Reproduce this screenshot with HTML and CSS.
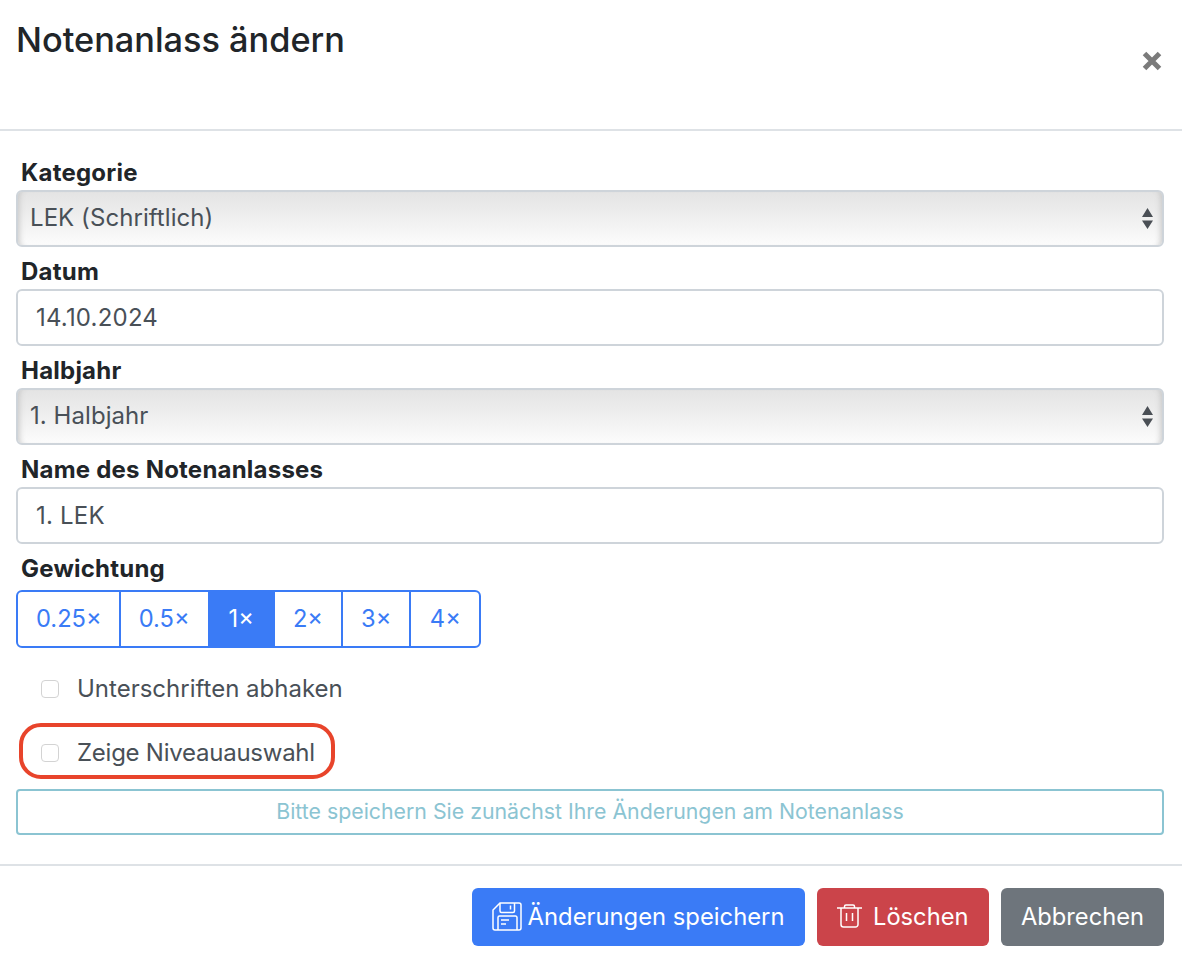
FILE: index.html
```html
<!DOCTYPE html>
<html lang="de">
<head>
<meta charset="UTF-8">
<title>Notenanlass ändern</title>
<link rel="stylesheet" href="styles.css">
</head>
<body>
<div class="modal">
  <header class="modal-header">
    <h1>Notenanlass ändern</h1>
    <button class="close-btn" aria-label="Schliessen">
      <svg width="22" height="22" viewBox="0 0 22 22"><path d="M3.500 3.500 18.500 18.500M18.500 3.500 3.500 18.500" stroke="#7b7b7b" stroke-width="5" fill="none"/></svg>
    </button>
  </header>

  <form class="modal-body">
    <label class="field-label">Kategorie</label>
    <div class="select-box">
      <span>LEK (Schriftlich)</span>
      <svg class="updown" width="11" height="21" viewBox="0 0 11 21"><path d="M5.500 0 11 9H0ZM0 12.500H11L5.500 21Z" fill="#4a4f55"/></svg>
    </div>

    <label class="field-label">Datum</label>
    <div class="text-box">14.10.2024</div>

    <label class="field-label">Halbjahr</label>
    <div class="select-box">
      <span>1. Halbjahr</span>
      <svg class="updown" width="11" height="21" viewBox="0 0 11 21"><path d="M5.500 0 11 9H0ZM0 12.500H11L5.500 21Z" fill="#4a4f55"/></svg>
    </div>

    <label class="field-label">Name des Notenanlasses</label>
    <div class="text-box">1. LEK</div>

    <label class="field-label">Gewichtung</label>
    <div class="btn-group">
      <span class="seg">0.25×</span>
      <span class="seg">0.5×</span>
      <span class="seg active">1×</span>
      <span class="seg">2×</span>
      <span class="seg">3×</span>
      <span class="seg">4×</span>
    </div>

    <div class="check-row first">
      <span class="checkbox"></span>
      <span class="check-text">Unterschriften abhaken</span>
    </div>
    <div class="check-row marked">
      <span class="checkbox"></span>
      <span class="check-text">Zeige Niveauauswahl</span>
    </div>

    <div class="save-note">Bitte speichern Sie zunächst Ihre Änderungen am Notenanlass</div>
  </form>

  <footer class="modal-footer">
    <button class="btn btn-blue">
      <svg width="30" height="29" viewBox="0 0 30 29" fill="none" stroke="#fff" stroke-width="1.500"><path d="M8 1H27a2 2 0 0 1 2 2V26a2 2 0 0 1-2 2H3a2 2 0 0 1-2-2V8Z"/><path d="M8 1V9a1.500 1.500 0 0 0 1.500 1.500H21A1.500 1.500 0 0 0 22.500 9V1"/><path d="M18.500 3.500V7.500"/><path d="M6 28V15.500A1.500 1.500 0 0 1 7.500 14H23.500A1.500 1.500 0 0 1 25 15.500V28"/><path d="M9 18H17M9 22H14"/></svg>
      Änderungen speichern
    </button>
    <button class="btn btn-red">
      <svg width="25" height="24" viewBox="0 0 25 24" fill="none" stroke="#fff" stroke-width="1.500"><path d="M0 4H25"/><path d="M7.500 4V2.500A1.500 1.500 0 0 1 9 1H16a1.500 1.500 0 0 1 1.500 1.500V4"/><path d="M4 4V20.500A2.500 2.500 0 0 0 6.500 23H18.500A2.500 2.500 0 0 0 21 20.500V4"/><path d="M9.500 9V17M15.500 9V17"/></svg>
      Löschen
    </button>
    <button class="btn btn-grey">Abbrechen</button>
  </footer>
</div>
</body>
</html>
```

FILE: styles.css
```css
*{box-sizing:border-box}
html,body{margin:0;padding:0;background:#fff}
body{font-family:Inter,"Liberation Sans",sans-serif;font-size:24px;color:#212529}

.modal{width:1182px;height:962px;display:flex;flex-direction:column}

/* ===== Header ===== */
.modal-header{
  height:131px;padding:17px 18px 0 16px;border-bottom:2px solid #dee2e6;
  display:flex;justify-content:space-between;align-items:flex-start
}
.modal-header h1{margin:0;font-size:34.300px;line-height:46px;font-weight:500}
.close-btn{background:none;border:none;padding:0;margin-top:32px;width:24px;height:24px;display:flex;align-items:center;justify-content:center}

/* ===== Form ===== */
.modal-body{padding:23px 18px 0 16px;display:flex;flex-direction:column;height:735px;border-bottom:2px solid #dee2e6}
.field-label{display:block;padding:1px 0 0 5px;height:36px;line-height:35px;font-weight:700;font-size:24px;letter-spacing:.22px}
.field-label+*{margin-bottom:6px}
.select-box,.text-box{
  height:57px;border:2px solid #ced4da;border-radius:6px;color:#495057;font-size:24px;
  display:flex;align-items:center
}
.text-box{padding-left:18px;background:#fff;letter-spacing:.2px}
.select-box{
  padding:0 9px 0 12px;justify-content:space-between;letter-spacing:.06px;
  background:linear-gradient(180deg,#e4e4e4 0%,#eeeeee 45%,#fcfcfc 100%);
  box-shadow:inset 7px 0 6px -6px #c4c4c4,inset -7px 0 6px -6px #c4c4c4
}
.select-box span{margin-bottom:2px}

.field-label+.btn-group{margin:4px 0 0}
.btn-group{display:flex;width:max-content;height:58px;border:2px solid #3a7bf6;border-radius:6px;overflow:hidden}
.seg{
  display:flex;align-items:center;justify-content:center;padding:0 18px 2px;
  color:#3a7bf6;font-size:23.700px;border-left:2px solid #3a7bf6
}
.seg:first-child{border-left:none;padding:0 17px 2px 18px}
.seg:last-child{padding:0 18.500px 2px}
.seg.active{background:#3a7bf6;color:#fff;padding:0 19px 2px}

.check-row{
  display:flex;align-items:center;height:56px;width:316px;margin-left:3px;padding-left:22px;
  color:#495057;font-size:24px;gap:18px;white-space:nowrap
}
.check-row.first{margin-top:13px;margin-bottom:6px}
.check-row.marked{border:4px solid #e8442b;border-radius:22px;padding:4px 0 0 18px;margin-bottom:10px;letter-spacing:-.25px}
.check-text{margin-bottom:2px}
.checkbox{width:18px;height:18px;border:1px solid #d3d3d3;border-radius:4px;background:#fff;flex:none}

.save-note{
  height:46px;border:2px solid #8bc4d2;border-radius:4px;color:#8bc4d2;font-size:21.300px;padding-bottom:2px;
  display:flex;align-items:center;justify-content:center
}

/* ===== Footer ===== */
.modal-footer{display:flex;justify-content:flex-end;gap:12px;padding:22px 18px 0 0}
.btn{
  height:58px;border:none;border-radius:6px;color:#fff;font:400 23.700px Inter,"Liberation Sans",sans-serif;
  display:flex;align-items:center;padding:0 20px 2px;gap:6px
}
.btn-blue{background:#3a7bf6;font-size:23.800px}
.btn-red{background:#cb444a;gap:11px;padding:0 20.500px 2px}
.btn-grey{background:#6e757c}
```
